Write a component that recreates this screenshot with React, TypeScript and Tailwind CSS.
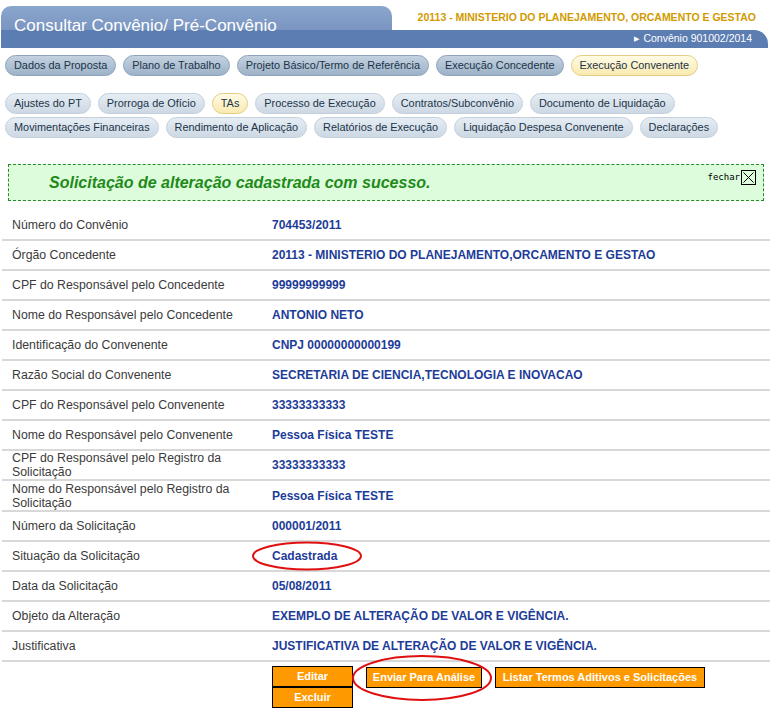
import { FC } from "react";

type Pill = { label: string; active?: boolean };

const mainTabs: Pill[] = [
  { label: "Dados da Proposta" },
  { label: "Plano de Trabalho" },
  { label: "Projeto Básico/Termo de Referência" },
  { label: "Execução Concedente" },
  { label: "Execução Convenente", active: true },
];

const subTabs1: Pill[] = [
  { label: "Ajustes do PT" },
  { label: "Prorroga de Ofício" },
  { label: "TAs", active: true },
  { label: "Processo de Execução" },
  { label: "Contratos/Subconvênio" },
  { label: "Documento de Liquidação" },
];

const subTabs2: Pill[] = [
  { label: "Movimentações Financeiras" },
  { label: "Rendimento de Aplicação" },
  { label: "Relatórios de Execução" },
  { label: "Liquidação Despesa Convenente" },
  { label: "Declarações" },
];

const rows: [string, string][] = [
  ["Número do Convênio", "704453/2011"],
  ["Órgão Concedente", "20113 - MINISTERIO DO PLANEJAMENTO,ORCAMENTO E GESTAO"],
  ["CPF do Responsável pelo Concedente", "99999999999"],
  ["Nome do Responsável pelo Concedente", "ANTONIO NETO"],
  ["Identificação do Convenente", "CNPJ 00000000000199"],
  ["Razão Social do Convenente", "SECRETARIA DE CIENCIA,TECNOLOGIA E INOVACAO"],
  ["CPF do Responsável pelo Convenente", "33333333333"],
  ["Nome do Responsável pelo Convenente", "Pessoa Física TESTE"],
  ["CPF do Responsável pelo Registro da Solicitação", "33333333333"],
  ["Nome do Responsável pelo Registro da Solicitação", "Pessoa Física TESTE"],
  ["Número da Solicitação", "000001/2011"],
  ["Situação da Solicitação", "Cadastrada"],
  ["Data da Solicitação", "05/08/2011"],
  ["Objeto da Alteração", "EXEMPLO DE ALTERAÇÃO DE VALOR E VIGÊNCIA."],
  ["Justificativa", "JUSTIFICATIVA DE ALTERAÇÃO DE VALOR E VIGÊNCIA."],
];

const PillRow: FC<{ items: Pill[]; dark?: boolean }> = ({ items, dark }) => (
  <div className="flex gap-[7px] pl-[5px]">
    {items.map((p) => (
      <div
        key={p.label}
        className={
          p.active
            ? "h-[21px] px-[8px] flex items-center whitespace-nowrap rounded-full border border-[#e3cd82] bg-gradient-to-b from-[#fffbe6] to-[#f9eab0] text-[10.9px] text-[#1c3448]"
            : dark
            ? "h-[21px] px-[8px] flex items-center whitespace-nowrap rounded-full border border-[#8ca2b9] bg-gradient-to-b from-[#c4d2e0] to-[#9db2c8] text-[10.9px] text-[#1c3448]"
            : "h-[21px] px-[8px] flex items-center whitespace-nowrap rounded-full border border-[#c3cfdb] bg-gradient-to-b from-[#e6edf4] to-[#ccd8e4] text-[10.9px] text-[#1c3448]"
        }
      >
        {p.label}
      </div>
    ))}
  </div>
);

const OrangeButton: FC<{ label: string; w: string }> = ({ label, w }) => (
  <div
    className={`${w} h-[21px] flex items-center justify-center bg-[#ff9900] border border-black text-white font-bold text-[11px]`}
  >
    {label}
  </div>
);

const App: FC = () => {
  return (
    <div className="relative w-[772px] h-[712px] bg-white font-['Liberation_Sans',Arial,sans-serif] overflow-hidden">
      {/* header */}
      <div className="pt-[6px] px-px">
        <div className="flex items-start">
          <div className="w-[391px] h-[24px] rounded-t-[10px] bg-gradient-to-b from-[#8ba6cd] to-[#7995c1] pl-[13px]">
            <span className="relative top-[8px] z-10 text-white text-[17px] leading-[20px]">
              Consultar Convênio/ Pré-Convênio
            </span>
          </div>
          <div className="flex-1 text-right pr-[15px] pt-[5px] text-[10.5px] font-bold text-[#d19b00] leading-[12px]">
            20113 - MINISTERIO DO PLANEJAMENTO, ORCAMENTO E GESTAO
          </div>
        </div>
        <div className="h-[18px] mr-[3px] rounded-tr-[14px] bg-[#5b7db2] flex items-center justify-end pr-[16px] text-white text-[10.5px]">
          <span className="text-[7px] mr-[4px]">▶</span>
          Convênio 901002/2014
        </div>
      </div>

      {/* tabs */}
      <div className="mt-[7px]">
        <PillRow items={mainTabs} dark />
      </div>
      <div className="mt-[17px]">
        <PillRow items={subTabs1} />
      </div>
      <div className="mt-[3px]">
        <PillRow items={subTabs2} />
      </div>

      {/* message */}
      <div className="mx-[8px] w-[756px] mt-[26px] h-[37px] border border-dashed border-[#2a8a2a] bg-[#ddfcdc] flex items-center relative">
        <span className="pl-[40px] text-[16px] font-bold italic text-[#1f8a1a]">
          Solicitação de alteração cadastrada com sucesso.
        </span>
        <div className="absolute right-[7px] top-[5px] flex items-center gap-px">
          <span className="font-['DejaVu_Sans_Mono',monospace] text-[9px] text-black">fechar</span>
          <svg width="15" height="15" viewBox="0 0 15 15">
            <rect x="0.5" y="0.5" width="14" height="14" fill="none" stroke="black" />
            <path d="M2.5 2.5 L12.5 12.5 M12.5 2.5 L2.5 12.5" stroke="black" strokeWidth="1" />
          </svg>
        </div>
      </div>

      {/* details */}
      <div className="mt-[10px] mx-[2px]">
        {rows.map(([label, value], i) => (
          <div
            key={label}
            className={`flex items-center ${i === 9 ? "h-[31px]" : "h-[30px]"} border-b-2 border-[#d8d8d8]`}
          >
            <div className="w-[260px] pl-[10px] pr-[20px] text-[12.3px] leading-[14px] text-[#3b3b3b]">
              {label}
            </div>
            <div className="pl-[10px] text-[12px] font-bold text-[#1d3c98]">{value}</div>
          </div>
        ))}
        <div className="flex gap-[13px] pl-[270px] pt-[4px]">
          <div className="flex flex-col">
            <OrangeButton label="Editar" w="w-[81px]" />
            <OrangeButton label="Excluir" w="w-[81px]" />
          </div>
          <div className="flex gap-[13px] pt-px items-start">
            <OrangeButton label="Enviar Para Análise" w="w-[116px]" />
            <OrangeButton label="Listar Termos Aditivos e Solicitações" w="w-[210px]" />
          </div>
        </div>
      </div>

      {/* annotations */}
      <svg className="absolute inset-0 pointer-events-none" width="772" height="712">
        <ellipse cx="307" cy="556" rx="54" ry="13.5" fill="none" stroke="#e01010" strokeWidth="2" />
        <ellipse cx="422" cy="678" rx="69" ry="22" fill="none" stroke="#e01010" strokeWidth="2" />
      </svg>
    </div>
  );
};

export default App;
